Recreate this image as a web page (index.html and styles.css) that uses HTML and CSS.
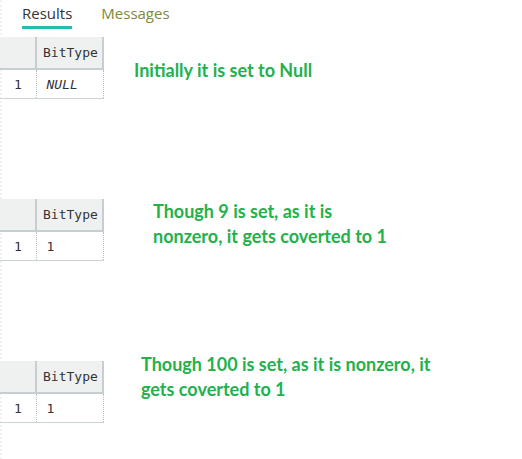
FILE: index.html
```html
<!DOCTYPE html>
<html>
<head>
<meta charset="utf-8">
<link rel="stylesheet" href="styles.css">
</head>
<body>
<div class="page">
  <div class="tabs">
    <div class="tab active">Results</div>
    <div class="tab">Messages</div>
  </div>
  <div class="section s1">
    <table class="grid">
      <tr><th class="num"></th><th>BitType</th></tr>
      <tr><td class="num">1</td><td class="null">NULL</td></tr>
    </table>
    <p class="note n1">Initially it is set to Null</p>
  </div>
  <div class="section s2">
    <table class="grid">
      <tr><th class="num"></th><th>BitType</th></tr>
      <tr><td class="num">1</td><td>1</td></tr>
    </table>
    <p class="note n2">Though 9 is set, as it is<br>nonzero, it gets coverted to 1</p>
  </div>
  <div class="section s3">
    <table class="grid">
      <tr><th class="num"></th><th>BitType</th></tr>
      <tr><td class="num">1</td><td>1</td></tr>
    </table>
    <p class="note n3">Though 100 is set, as it is nonzero, it<br>gets coverted to 1</p>
  </div>
</div>
</body>
</html>
```

FILE: styles.css
```css
html, body { margin: 0; padding: 0; background: #fff; }
.page {
  width: 522px;
  height: 459px;
  border-left: 2px dotted #f0f2f2;
  box-sizing: border-box;
}
.tabs {
  display: flex;
  gap: 29px;
  padding-left: 20px;
  height: 37px;
  font-family: "Open Sans", "Noto Sans", sans-serif;
  font-size: 15px;
}
.tab {
  padding-top: 3px;
  height: 25px;
  color: #7d8a3e;
}
.tab.active {
  color: #333;
  border-bottom: 3px solid #2bbbad;
  height: 23px;
}
.section { display: flex; align-items: flex-start; }
.s2 { margin-top: 100px; }
.s3 { margin-top: 100px; }
.grid {
  border-collapse: collapse;
  font-family: "DejaVu Sans Mono", monospace;
  font-size: 13px;
  color: #333;
  margin-left: -2px;
}
.grid th {
  background: #eff1f1;
  font-weight: normal;
  text-align: left;
  height: 31px;
  padding: 0 4px 0 6px;
  border-bottom: 2px solid #c6ced2;
  border-right: 2px solid #c6ced2;
  width: 55px;
}
.grid th.num { width: 35px; padding: 0; border-right: 2px solid #c6ced2; }
.grid td {
  height: 28px;
  padding: 0 10px;
  border-bottom: 1px solid #ccd3d6;
  border-right: 1px dotted #b8bfc2;
}
.grid td.num { padding-left: 14px; padding-right: 0; }
.null { font-style: italic; }
.note {
  margin: 0;
  font-family: "Lato", "Open Sans", sans-serif;
  font-weight: bold;
  font-size: 18px;
  line-height: 25px;
  color: #22b14c;
}
.n1 { margin-left: 30px; margin-top: 21px; }
.n2 { margin-left: 49px; margin-top: 0px; }
.n3 { margin-left: 37px; margin-top: -9px; }
```
